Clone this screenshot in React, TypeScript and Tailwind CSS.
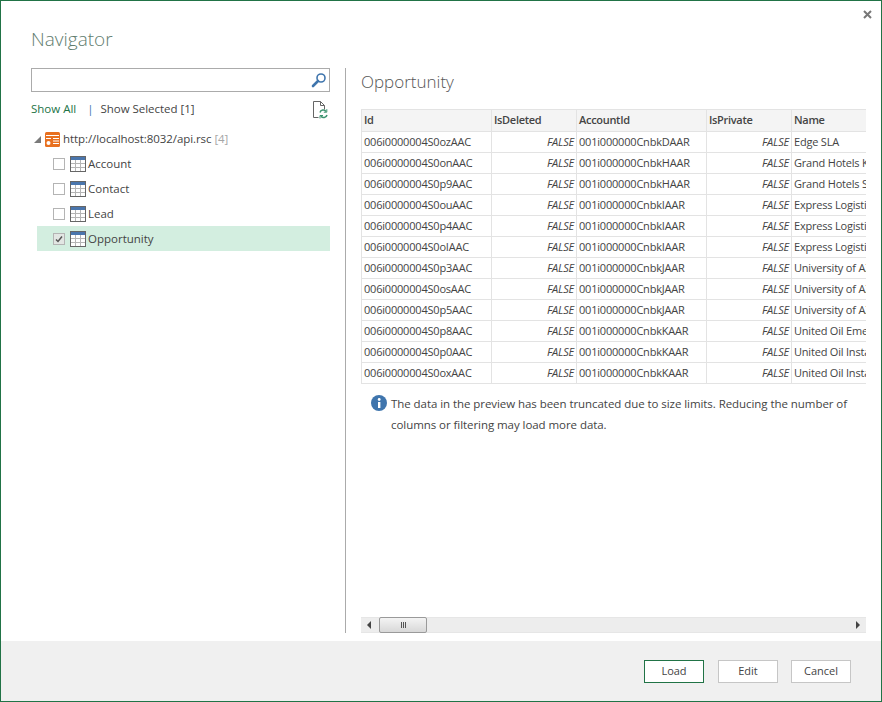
import React from "react";

const rows = [
  ["006i0000004S0ozAAC", "001i000000CnbkDAAR", "Edge SLA"],
  ["006i0000004S0onAAC", "001i000000CnbkHAAR", "Grand Hotels Kitchen"],
  ["006i0000004S0p9AAC", "001i000000CnbkHAAR", "Grand Hotels SLA"],
  ["006i0000004S0ouAAC", "001i000000CnbkIAAR", "Express Logistics"],
  ["006i0000004S0p4AAC", "001i000000CnbkIAAR", "Express Logistics"],
  ["006i0000004S0oIAAC", "001i000000CnbkIAAR", "Express Logistics"],
  ["006i0000004S0p3AAC", "001i000000CnbkJAAR", "University of AZ"],
  ["006i0000004S0osAAC", "001i000000CnbkJAAR", "University of AZ"],
  ["006i0000004S0p5AAC", "001i000000CnbkJAAR", "University of AZ"],
  ["006i0000004S0p8AAC", "001i000000CnbkKAAR", "United Oil Emergency"],
  ["006i0000004S0p0AAC", "001i000000CnbkKAAR", "United Oil Installations"],
  ["006i0000004S0oxAAC", "001i000000CnbkKAAR", "United Oil Installations"],
];

const headers = ["Id", "IsDeleted", "AccountId", "IsPrivate", "Name"];
const tables = ["Account", "Contact", "Lead", "Opportunity"];

const TableIcon = () => (
  <svg width="16" height="16" viewBox="0 0 16 16" className="shrink-0">
    <rect x="0.5" y="0.5" width="15" height="15" fill="#fff" stroke="#666" />
    <rect x="1" y="1" width="14" height="3" fill="#4a76ad" />
    <path d="M5.5 4v11M10.5 4v11M1 7.5h14M1 11.5h14" stroke="#b5b5b5" fill="none" />
  </svg>
);

const SourceIcon = () => (
  <svg width="15" height="15" viewBox="0 0 15 15" className="shrink-0 block">
    <rect width="15" height="15" rx="1.5" fill="#e8701f" />
    <path d="M1 3.5h13M8 6.5h6M8 9h6M8 11.5h6M1 6.5h5" stroke="#fff" fill="none" />
    <circle cx="3.5" cy="11" r="2" fill="#fff" />
  </svg>
);

const Cell = ({ children, className = "" }: { children: React.ReactNode; className?: string }) => (
  <td className={`border border-[#e3e3e3] px-[2px] overflow-hidden whitespace-nowrap ${className}`}>
    {children}
  </td>
);

export default function App() {
  return (
    <div className="w-[882px] h-[702px] flex flex-col bg-white border border-[#217346] text-[#444] text-[11.5px] font-['Open_Sans','Noto_Sans',sans-serif] overflow-hidden relative">
      <svg width="9" height="9" viewBox="0 0 9 9" className="absolute right-[9px] top-[9px]">
        <path d="M1 1l7 7M8 1l-7 7" stroke="#777" strokeWidth="2" fill="none" />
      </svg>

      <div className="flex-1 min-h-0 flex flex-col">
        <h1 className="pl-[30px] pt-[25px] h-[67px] text-[19px] leading-[26px] font-light text-[#5f7d6e]">
          Navigator
        </h1>

        <div className="flex items-stretch">
          {/* left side */}
          <div className="w-[344px] pl-[30px] shrink-0">
            <div className="h-[24px] w-[299px] border border-[#ababab] flex items-center justify-end pr-[2px]">
              <svg width="16" height="16" viewBox="0 0 16 16">
                <circle cx="10" cy="6" r="4" fill="none" stroke="#3f75ad" strokeWidth="1.6" />
                <path d="M7 9l-5 5" stroke="#3f75ad" strokeWidth="2.6" strokeLinecap="round" />
              </svg>
            </div>

            <div className="mt-[5px] h-[24px] w-[299px] flex items-center">
              <span className="text-[#217346]">Show All</span>
              <span className="ml-[11px] text-[#3f75ad]">|</span>
              <span className="ml-[7px] tracking-[-0.04px]">Show Selected [1]</span>
              <svg width="16" height="19" viewBox="0 0 16 19" className="ml-auto mr-[2px]">
                <path d="M1.5 17.5v-16h7l4 4v4M8.5 1.5v4h4M1.5 17.5h5" fill="none" stroke="#666" />
                <path d="M8 12.5a3.3 3.3 0 0 1 6-1M15 15a3.3 3.3 0 0 1-6 1" fill="none" stroke="#3d9470" strokeWidth="1.5" />
                <path d="M14.8 9.2v3h-3M8 18.5v-3h3" fill="none" stroke="#3d9470" />
              </svg>
            </div>

            <div className="mt-[6px] h-[24px] flex items-center">
              <span className="w-0 h-0 ml-[3px] border-l-[7px] border-l-transparent border-b-[7px] border-b-[#7a7a7a]" />
              <span className="ml-[4px]"><SourceIcon /></span>
              <span className="ml-[3px] tracking-[-0.07px]">http://localhost:8032/api.rsc <span className="text-[#a6a6a6]">[4]</span></span>
            </div>

            {tables.map((name) => {
              const on = name === "Opportunity";
              return (
                <div
                  key={name}
                  className={`ml-[6px] w-[293px] h-[25px] flex items-center pl-[16px] ${on ? "bg-[#d3eee0]" : ""}`}
                >
                  <span className={`w-[12px] h-[12px] border border-[#b4b4b4] flex items-center justify-center ${on ? "bg-[#e2e6e3]" : "bg-white"}`}>
                    {on && (
                      <svg width="8" height="8" viewBox="0 0 8 8">
                        <path d="M1 4.5l2 2 4-5" fill="none" stroke="#555" strokeWidth="1.5" />
                      </svg>
                    )}
                  </span>
                  <span className="ml-[5px]"><TableIcon /></span>
                  <span className="ml-[2px]">{name}</span>
                </div>
              );
            })}
          </div>

          {/* right side */}
          <div className="flex-1 min-w-0 h-[565px] border-l border-[#ababab] pl-[15px] flex flex-col">
            <h2 className="h-[41px] pt-[1px] text-[17px] leading-[25px] font-light text-[#555]">Opportunity</h2>

            <div className="w-[505px] overflow-hidden">
              <table className="table-fixed w-[506px] border-collapse text-[11px] tracking-[-0.2px]">
                <colgroup>
                  <col className="w-[130px]" />
                  <col className="w-[85px]" />
                  <col className="w-[130px]" />
                  <col className="w-[85px]" />
                  <col className="w-[76px]" />
                </colgroup>
                <thead>
                  <tr className="h-[22px] bg-[#f4f4f4]">
                    {headers.map((h) => (
                      <Cell key={h} className="font-semibold text-left tracking-[-0.3px]">{h}</Cell>
                    ))}
                  </tr>
                </thead>
                <tbody>
                  {rows.map((r) => (
                    <tr key={r[0]} className="h-[21px]">
                      <Cell>{r[0]}</Cell>
                      <Cell className="text-right italic">FALSE</Cell>
                      <Cell>{r[1]}</Cell>
                      <Cell className="text-right italic">FALSE</Cell>
                      <Cell>{r[2]}</Cell>
                    </tr>
                  ))}
                </tbody>
              </table>
            </div>

            <div className="mt-[9px] flex pl-[10px] w-[505px]">
              <svg width="16" height="16" viewBox="0 0 16 16" className="shrink-0 mt-[2px]">
                <circle cx="8" cy="8" r="8" fill="#3f75ad" />
                <rect x="7" y="7" width="2.4" height="6" fill="#fff" />
                <circle cx="8.2" cy="4.5" r="1.4" fill="#fff" />
              </svg>
              <p className="ml-[4px] leading-[21px] tracking-[-0.06px]">
                The data in the preview has been truncated due to size limits. Reducing the number of columns or filtering may load more data.
              </p>
            </div>

            <div className="mt-auto h-[16px] w-[505px] bg-[#ededed] border-y border-[#e6e6e6] flex items-center justify-between px-[6px] relative">
              <span className="w-0 h-0 border-y-[4px] border-y-transparent border-r-[4px] border-r-[#444]" />
              <div className="absolute left-[18px] top-[-1px] w-[48px] h-[16px] rounded-[2px] border border-[#9a9a9a] bg-gradient-to-b from-[#f4f4f4] to-[#d8d8d8] flex items-center justify-center gap-[1px]">
                <span className="w-[1px] h-[6px] bg-[#555]" />
                <span className="w-[1px] h-[6px] bg-[#555]" />
                <span className="w-[1px] h-[6px] bg-[#555]" />
              </div>
              <span className="w-0 h-0 border-y-[4px] border-y-transparent border-l-[4px] border-l-[#444]" />
            </div>
          </div>
        </div>
      </div>

      <div className="h-[60px] bg-[#f0f0f0] shrink-0 flex items-center justify-end pr-[30px] text-[11px]">
        <button className="w-[60px] h-[23px] bg-white border border-[#217346]">Load</button>
        <button className="ml-[14px] w-[60px] h-[23px] bg-white border border-[#c6c6c6]">Edit</button>
        <button className="ml-[13px] w-[60px] h-[23px] bg-white border border-[#c6c6c6]">Cancel</button>
      </div>
    </div>
  );
}
